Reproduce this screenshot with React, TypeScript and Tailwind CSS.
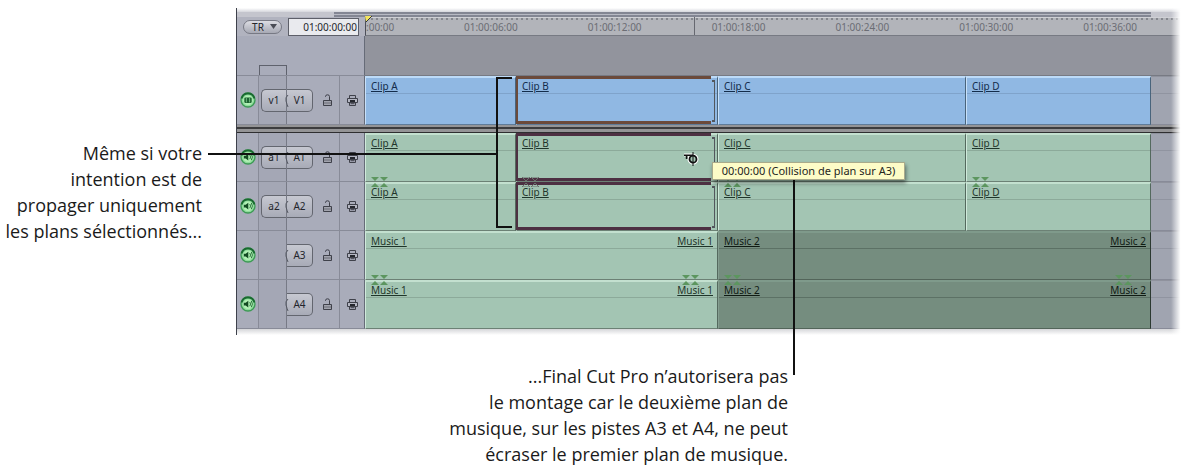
import { clsx } from "clsx";

type Kind = "video" | "audio" | "music";

interface Clip {
  name: string;
  selected?: boolean;
  locked?: boolean;
  endLabel?: boolean;
}

interface Track {
  id: string;
  source?: string;
  kind: Kind;
  marks?: "top" | "bottom";
}

const tracks: Track[] = [
  { id: "V1", source: "v1", kind: "video" },
  { id: "A1", source: "a1", kind: "audio", marks: "bottom" },
  { id: "A2", source: "a2", kind: "audio", marks: "top" },
  { id: "A3", kind: "music", marks: "bottom" },
  { id: "A4", kind: "music", marks: "top" },
];

const clips: Clip[] = [
  { name: "Clip A" },
  { name: "Clip B", selected: true },
  { name: "Clip C" },
  { name: "Clip D" },
];

const music: Clip[] = [
  { name: "Music 1", endLabel: true },
  { name: "Music 2", endLabel: true, locked: true },
];

const times = ["01:00:06:00", "01:00:12:00", "01:00:18:00", "01:00:24:00", "01:00:30:00", "01:00:36:00"];

function EnableIcon({ video }: { video: boolean }) {
  return (
    <svg width="16" height="16" viewBox="0 0 16 16" fill="none">
      <circle cx="8" cy="8" r="7" fill="#8fdc9c" stroke="#3d9a55" strokeWidth="1.3" />
      <path d="M1.6 6.5A6.6 6.6 0 0 1 14.4 6.5" stroke="#196a30" strokeWidth="1.8" />
      <circle cx="8" cy="8.3" r="4.8" fill="#b2f1b5" />
      {video ? (
        <>
          <rect x="4.3" y="5.5" width="7.4" height="5.4" rx="1.2" fill="#1d6431" />
          <path d="M6.4 6v4.4M9.6 6v4.4" stroke="#8fdc9c" strokeWidth=".7" />
        </>
      ) : (
        <>
          <path d="M3.8 6.8h1.9l2.6-2v6.6l-2.6-2H3.8z" fill="#124b22" />
          <path d="M9.8 6q1.5 2 0 4.2M11.3 5q2.2 3.1 0 6.2" stroke="#1d6431" strokeWidth=".9" />
        </>
      )}
    </svg>
  );
}

function LockIcon() {
  return (
    <svg width="9" height="12" viewBox="0 0 9 12" fill="none">
      <path d="M2.5 3V2.5Q2.5.8 4.5.8T6.5 2.5V6" stroke="#3f414a" />
      <path d="M.5 6.5h8v5h-8z" fill="#a2a4ae" stroke="#3f414a" />
      <path d="M1 9h7" stroke="#6b6d76" />
    </svg>
  );
}

function AutoSelectIcon() {
  return (
    <svg width="11" height="11" viewBox="0 0 11 11" fill="none" stroke="#3f414a">
      <path d="M2.5 3V.5h6V3M2.5 8v2.5h6V8" />
      <path d="M.5 3.5h10v4H.5z" fill="#b4b6c2" />
      <path d="M3 5h5v2H3z" fill="#24262d" stroke="none" />
      <path d="M3.5 8.7h4" />
    </svg>
  );
}

function SyncMarks({ up, outlined }: { up: boolean; outlined?: boolean }) {
  return (
    <svg
      width="17"
      height="4"
      viewBox="0 0 17 4"
      fill={outlined ? "none" : "#5c965f"}
      stroke={outlined ? "#69716c" : "none"}
    >
      <path d={up ? "M0 4 4 0l4 4zM9 4l4-4 4 4z" : "M0 0h8L4 4zM9 0h8l-4 4z"} />
    </svg>
  );
}

function ClipBox({ clip, track }: { clip: Clip; track: Track }) {
  const video = track.kind === "video";
  return (
    <div
      className={clsx(
        "relative min-w-0 border-t-2 border-l border-r border-b",
        video && "border-t-[#bddbf8] border-l-[#c8e1fa] border-r-[#49647c] border-b-[#5f7b98] bg-[#90b8e3]",
        !video && !clip.locked && "border-t-[#c3e0cf] border-l-[#d0eadb] border-r-[#54695e] border-b-[#6c8175] bg-[#a3c5b3]",
        clip.locked && "border-t-[#7f9a8b] border-l-[#849e90] border-r-[#2c3931] border-b-[#53655a] bg-[#758d7f]"
      )}
    >
      <div
        className={clsx(
          "flex h-4 items-center justify-between border-b pr-1 pl-[5px] text-[10px] leading-4 underline underline-offset-1",
          video ? "border-[#7fa3cb] text-[#132c4b]" : clip.locked ? "border-[#5c7165] text-[#101b14]" : "border-[#8caa9a] text-[#1f352a]"
        )}
      >
        <span>{clip.name}</span>
        {clip.endLabel && <span>{clip.name}</span>}
      </div>
      {clip.selected && (
        <>
          <div
            className={clsx(
              "absolute -top-0.5 right-[6px] bottom-0 -left-px border-y-[3px] border-l-2",
              video ? "border-[#6b4a3b]" : "border-[#4d3042]"
            )}
          />
          <div className="absolute top-0.5 right-0.5 bottom-0.5 w-[3px] border-y-2 border-r border-[#52575d]" />
        </>
      )}
      {track.marks && (
        <div
          className={clsx(
            "absolute right-[18px] left-[5px] flex justify-between",
            track.marks === "top" ? "-top-px" : "bottom-0"
          )}
        >
          <SyncMarks up={track.marks === "top"} outlined={clip.selected} />
          {clip.endLabel && <SyncMarks up={track.marks === "top"} />}
        </div>
      )}
    </div>
  );
}

function TrackHeader({ track }: { track: Track }) {
  return (
    <div className="grid w-32 shrink-0 grid-cols-[22px_28px_52px_26px] border-r border-b border-r-[#666b78] border-b-[#888b98] bg-[#a9acba]">
      <button aria-label={`Activer ${track.id}`} className="flex items-center justify-center border-r border-[#888b98]">
        <EnableIcon video={track.kind === "video"} />
      </button>
      <div className="flex items-center border-r border-[#777a86] bg-[#a4a7b5] pl-0.5">
        {track.source && (
          <button className="h-[23px] w-full rounded-l-[5px] border border-r-0 border-[#63666f] bg-gradient-to-b from-[#c6c8d1] to-[#a8abb7] text-[10px] leading-5 text-[#23252c]">
            {track.source}
          </button>
        )}
      </div>
      <div className="flex items-center">
        <button className="relative h-[23px] w-[26px] rounded-r-[5px] border border-l-0 border-[#63666f] bg-gradient-to-b from-[#c6c8d1] to-[#a8abb7] text-[10px] leading-5 text-[#23252c]">
          <svg className="absolute top-1 -left-0.5" width="4" height="14" viewBox="0 0 4 14" fill="none">
            <path d="M3 1Q0 3.5 1 7T3 13" stroke="#555862" />
          </svg>
          {track.id}
        </button>
        <button aria-label={`Verrouiller ${track.id}`} className="ml-2.5">
          <LockIcon />
        </button>
      </div>
      <button aria-label={`Sélection automatique ${track.id}`} className="flex items-center justify-center border-l border-[#888b98]">
        <AutoSelectIcon />
      </button>
    </div>
  );
}

function TrackRow({ track }: { track: Track }) {
  const isMusic = track.kind === "music";
  return (
    <div className="flex h-[49px]">
      <TrackHeader track={track} />
      <div
        className={clsx(
          "grid flex-1",
          isMusic ? "grid-cols-[353fr_433fr_36fr]" : "grid-cols-[151fr_202fr_248fr_185fr_36fr]"
        )}
      >
        {(isMusic ? music : clips).map((clip) => (
          <ClipBox key={clip.name} clip={clip} track={track} />
        ))}
        <div className="border-y border-t-[#8f929d] border-b-[#888b98] bg-[#a0a4b0]">
          <div className="h-[17px] border-b border-[#9094a0]" />
        </div>
      </div>
    </div>
  );
}

function Ruler() {
  return (
    <div className="flex h-[19px]">
      <div className="flex w-32 shrink-0 items-center bg-[#b1b3bf] pl-1.5">
        <button className="flex h-3.5 w-[39px] items-center justify-center gap-1.5 rounded-full border border-[#777984] bg-gradient-to-b from-[#dcdde3] to-[#a7a9b4] pl-1 text-[10px] leading-3 text-[#24262c]">
          TR
          <svg width="7" height="5" viewBox="0 0 7 5">
            <path d="M0 0h7L3.5 5z" fill="#4a4c55" />
          </svg>
        </button>
        <input
          aria-label="Timecode actuel"
          defaultValue="01:00:00:00"
          className="ml-1.5 h-[18px] w-[71px] border border-[#5d5f69] bg-[#e9eaee] pr-px text-right text-[10px] text-[#24262c]"
        />
      </div>
      <div className="relative flex-1 border-b border-l border-b-[#777a83] border-l-[#4c4f59] bg-[#b2b4ba]">
        <div className="h-[3px] border-t border-[#cfd0d5] bg-[repeating-linear-gradient(90deg,#85878e_0_2px,transparent_2px_5px)]" />
        <div className="grid grid-cols-[63fr_repeat(6,124fr)_15fr] text-center text-[10px] leading-[14px] text-[#6b6d74]">
          <span className="text-left">:00:00</span>
          {times.map((time) => (
            <span key={time}>{time}</span>
          ))}
        </div>
        <div className="absolute top-0 bottom-0 left-[40%] w-px bg-[#666870]" />
        {/* playhead */}
        <svg className="absolute -top-px -left-px" width="8" height="7" viewBox="0 0 8 7">
          <path d="M0 0h7L1 6z" fill="#f3e45e" />
          <path d="M7 0 1 6" stroke="#33343a" />
        </svg>
      </div>
    </div>
  );
}

function Timeline() {
  return (
    <section aria-label="Timeline" className="relative border-l border-[#3e414b] font-['Noto_Sans',sans-serif]">
      <div className="flex h-[9px] flex-col bg-[#c4c5cd]">
        <div className="h-1 bg-gradient-to-b from-white to-[#d5d6dc]" />
        <div className="mr-9 ml-[97px] h-[5px] border-y-2 border-[#838693] bg-[#b8bac4]" />
      </div>
      <Ruler />
      <div className="flex h-10">
        <div className="grid w-32 shrink-0 grid-cols-[22px_28px_78px] items-end border-r border-b border-r-[#666b78] border-b-[#888b98] bg-[#a9acba]">
          <span />
          <div className="h-2.5 border border-b-0 border-[#5f626d]" />
        </div>
        <div className="flex-1 border-b border-[#777a83] bg-[#92949d]" />
      </div>
      <TrackRow track={tracks[0]} />
      <div className="h-2 bg-[#949496] pt-0.5">
        <div className="h-1.5 border-t-2 border-b border-t-[#3c3c3e] border-b-[#2e2e30]" />
      </div>
      {tracks.slice(1).map((track) => (
        <TrackRow key={track.id} track={track} />
      ))}
      <div className="h-1.5 bg-gradient-to-b from-[#d5d6d9] to-white" />
      <div className="pointer-events-none absolute inset-y-0 right-0 w-4 bg-gradient-to-r from-transparent to-white to-60%" />
    </section>
  );
}

export default function App() {
  return (
    <main className="relative bg-white font-['Open_Sans',sans-serif] text-lg leading-[26px] text-[#1a1a1a]">
      <div className="flex">
        <p className="w-[236px] shrink-0 pt-[140px] pr-[34px] text-right">
          Même si votre
          <br />
          intention est de
          <br />
          propager uniquement
          <br />
          les plans sélectionnés...
        </p>
        <div className="min-w-0 flex-1 pt-2">
          <Timeline />
        </div>
      </div>
      <p className="w-[788px] pt-7 text-right">
        ...Final Cut Pro n’autorisera pas
        <br />
        le montage car le deuxième plan de
        <br />
        musique, sur les pistes A3 et A4, ne peut
        <br />
        écraser le premier plan de musique.
      </p>

      {/* callout lines */}
      <div className="absolute top-[153px] left-[208px] h-0.5 w-[288px] bg-[#111]" />
      <div className="absolute top-[77px] left-[496px] h-[151px] w-4 border-2 border-r-0 border-[#111]" />
      <div className="absolute top-[178px] left-[793px] h-[197px] w-0.5 bg-[#111]" />

      {/* ripple cursor */}
      <svg className="absolute top-[151px] left-[683px]" width="16" height="16" viewBox="0 0 16 16" fill="none">
        <path d="M1 4h9" stroke="#fff" strokeWidth="3" />
        <circle cx="10" cy="8.2" r="3.5" stroke="#fff" strokeWidth="4" />
        <path d="M1 4.2h9M3.6 4v4" stroke="#111" strokeWidth="1.6" />
        <circle cx="10" cy="8.2" r="3.5" fill="#a3c5b3" stroke="#111" strokeWidth="1.8" />
        <path d="M10 1v14" stroke="#111" />
      </svg>

      <div
        role="tooltip"
        className="absolute top-[162px] left-[712px] h-[18px] w-[193px] border border-[#a9aa8b] bg-[#fdfcc7] text-center font-['Noto_Sans',sans-serif] text-[11px] leading-4 whitespace-nowrap text-[#25251c] shadow-[1px_3px_4px_#0007]"
      >
        00:00:00 (Collision de plan sur A3)
      </div>
    </main>
  );
}
